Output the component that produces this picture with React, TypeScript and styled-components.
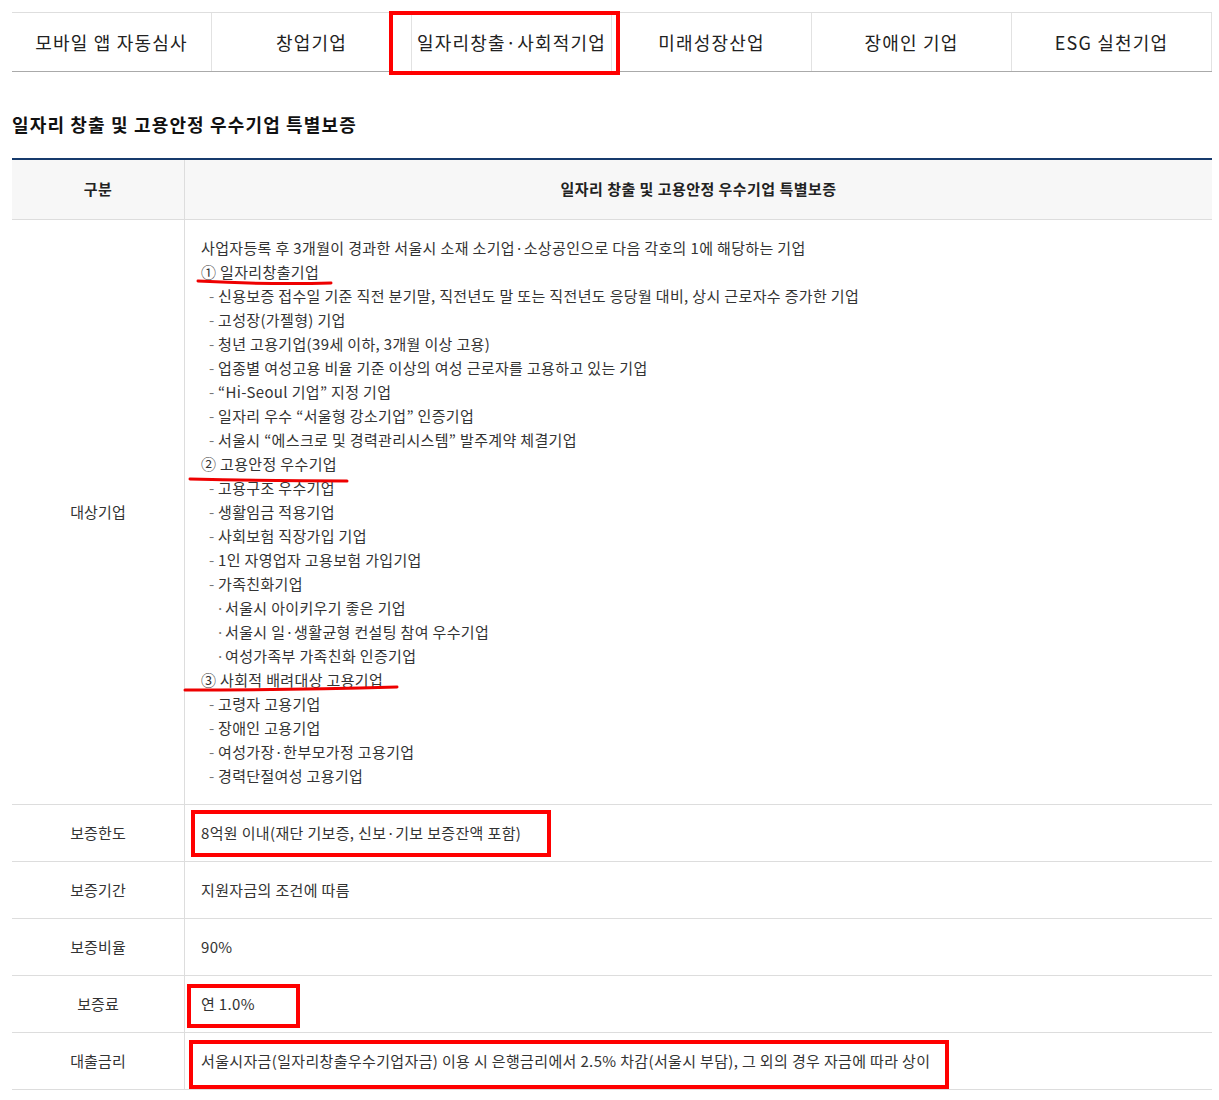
import React from 'react';
import styled, { createGlobalStyle } from 'styled-components';

const GlobalStyle = createGlobalStyle`
  html, body { margin: 0; padding: 0; background: #fff; }
  body {
    font-family: "Noto Sans CJK KR", "Noto Sans", sans-serif;
    color: #333;
  }
  * { box-sizing: border-box; }
`;

const Page = styled.div`
  width: 1200px;
  margin-left: 12px;
  padding-top: 12px;
  padding-bottom: 10px;
`;

const TabBar = styled.ul`
  display: grid;
  grid-template-columns: repeat(6, 1fr);
  margin: 0;
  padding: 0;
  list-style: none;
  border-top: 1px solid #dedede;
  border-bottom: 1px solid #aaa;
`;

const Tab = styled.li`
  position: relative;
  height: 58px;
  display: flex;
  align-items: center;
  justify-content: center;
  font-size: 18px;
  letter-spacing: 1.2px;
  color: #222;
  border-right: 1px solid #e2e2e2;
`;

const Title = styled.h3`
  margin: 39px 0 0;
  font-size: 18px;
  line-height: 26px;
  font-weight: 700;
  color: #111;
  letter-spacing: 1.15px;
`;

const Table = styled.table`
  width: 100%;
  margin-top: 21px;
  border-collapse: separate;
  border-spacing: 0;
  border-top: 2px solid #163a6c;
  table-layout: fixed;
  font-size: 15px;
  letter-spacing: 0.35px;
  line-height: 24px;
`;

const HeadCell = styled.th<{ $first?: boolean }>`
  background: #f7f7f7;
  padding: 17px 16px 18px;
  font-weight: 700;
  color: #222;
  letter-spacing: 0.45px;
  text-align: center;
  border-bottom: 1px solid #ddd;
  border-right: ${p => (p.$first ? '1px solid #ddd' : '0')};
`;

const RowHead = styled.th`
  font-weight: 400;
  color: #333;
  text-align: center;
  vertical-align: middle;
  padding: 16px 8px;
  letter-spacing: 0.1px;
  border-bottom: 1px solid #ddd;
  border-right: 1px solid #ddd;
`;

const Cell = styled.td`
  text-align: left;
  vertical-align: middle;
  color: #333;
  padding: 16px;
  border-bottom: 1px solid #ddd;
`;

const Lines = styled.div`
  display: flex;
  flex-direction: column;
`;

const Line = styled.div<{ $indent: number }>`
  position: relative;
  display: flex;
  height: 24px;
  padding-left: ${p => p.$indent}px;
  white-space: nowrap;
`;

const Marker = styled.span<{ $w: number }>`
  flex: none;
  width: ${p => p.$w}px;
  color: #777;
`;

const Marked = styled.span`
  position: relative;
  display: inline-block;
`;

const RedBox = styled.span<{ $l: number; $t: number; $w: number; $h: number }>`
  position: absolute;
  left: ${p => p.$l}px;
  top: ${p => p.$t}px;
  width: ${p => p.$w}px;
  height: ${p => p.$h}px;
  border: 4px solid #ff0000;
  pointer-events: none;
  z-index: 2;
`;

const Scribble = styled.svg<{ $l: number; $t: number }>`
  position: absolute;
  left: ${p => p.$l}px;
  top: ${p => p.$t}px;
  overflow: visible;
  z-index: 2;
  pointer-events: none;
`;

type Kind = 'plain' | 'head' | 'dash' | 'dot';
interface Mark { l: number; t: number; w: number; d: string }
interface Item { kind: Kind; text: string; mark?: Mark }

const items: Item[] = [
  { kind: 'plain', text: '사업자등록 후 3개월이 경과한 서울시 소재 소기업·소상공인으로 다음 각호의 1에 해당하는 기업' },
  { kind: 'head', text: '① 일자리창출기업', mark: { l: -5, t: 18, w: 137, d: 'M2 3 C 40 5 100 6 135 5' } },
  { kind: 'dash', text: '신용보증 접수일 기준 직전 분기말, 직전년도 말 또는 직전년도 응당월 대비, 상시 근로자수 증가한 기업' },
  { kind: 'dash', text: '고성장(가젤형) 기업' },
  { kind: 'dash', text: '청년 고용기업(39세 이하, 3개월 이상 고용)' },
  { kind: 'dash', text: '업종별 여성고용 비율 기준 이상의 여성 근로자를 고용하고 있는 기업' },
  { kind: 'dash', text: '“Hi-Seoul 기업” 지정 기업' },
  { kind: 'dash', text: '일자리 우수 “서울형 강소기업” 인증기업' },
  { kind: 'dash', text: '서울시 “에스크로 및 경력관리시스템” 발주계약 체결기업' },
  { kind: 'head', text: '② 고용안정 우수기업', mark: { l: -13, t: 24, w: 161, d: 'M2 3 Q 80 5 159 5' } },
  { kind: 'dash', text: '고용구조 우수기업' },
  { kind: 'dash', text: '생활임금 적용기업' },
  { kind: 'dash', text: '사회보험 직장가입 기업' },
  { kind: 'dash', text: '1인 자영업자 고용보험 가입기업' },
  { kind: 'dash', text: '가족친화기업' },
  { kind: 'dot', text: '서울시 아이키우기 좋은 기업' },
  { kind: 'dot', text: '서울시 일·생활균형 컨설팅 참여 우수기업' },
  { kind: 'dot', text: '여성가족부 가족친화 인증기업' },
  { kind: 'head', text: '③ 사회적 배려대상 고용기업', mark: { l: -18, t: 16, w: 216, d: 'M2 6 Q 100 6 214 3' } },
  { kind: 'dash', text: '고령자 고용기업' },
  { kind: 'dash', text: '장애인 고용기업' },
  { kind: 'dash', text: '여성가장·한부모가정 고용기업' },
  { kind: 'dash', text: '경력단절여성 고용기업' },
];

const tabs = ['모바일 앱 자동심사', '창업기업', '일자리창출·사회적기업', '미래성장산업', '장애인 기업', 'ESG 실천기업'];

const renderLine = (it: Item, i: number) => {
  const indent = it.kind === 'dash' ? 8 : it.kind === 'dot' ? 15 : 0;
  return (
    <Line key={i} $indent={indent}>
      {it.kind === 'dash' && <Marker $w={9}>-</Marker>}
      {it.kind === 'dot' && <Marker $w={9}>·</Marker>}
      <span>{it.text}</span>
      {it.mark && (
        <Scribble $l={it.mark.l} $t={it.mark.t} width={it.mark.w} height={8} viewBox={`0 0 ${it.mark.w} 8`}>
          <path d={it.mark.d} stroke="#ee0000" strokeWidth={3} strokeLinecap="round" fill="none" />
        </Scribble>
      )}
    </Line>
  );
};

export default function App() {
  return (
    <Page>
      <GlobalStyle />
      <TabBar>
        {tabs.map((t, i) => (
          <Tab key={t}>
            {t}
            {i === 2 && <RedBox $l={-23} $t={-2} $w={231} $h={64} />}
          </Tab>
        ))}
      </TabBar>

      <Title>일자리 창출 및 고용안정 우수기업 특별보증</Title>

      <Table>
        <colgroup>
          <col style={{ width: 173 }} />
          <col />
        </colgroup>
        <thead>
          <tr>
            <HeadCell $first>구분</HeadCell>
            <HeadCell>일자리 창출 및 고용안정 우수기업 특별보증</HeadCell>
          </tr>
        </thead>
        <tbody>
          <tr>
            <RowHead>대상기업</RowHead>
            <Cell>
              <Lines>{items.map(renderLine)}</Lines>
            </Cell>
          </tr>
          <tr>
            <RowHead>보증한도</RowHead>
            <Cell>
              <Marked>
                8억원 이내(재단 기보증, 신보·기보 보증잔액 포함)
                <RedBox $l={-10} $t={-11} $w={360} $h={47} />
              </Marked>
            </Cell>
          </tr>
          <tr>
            <RowHead>보증기간</RowHead>
            <Cell>지원자금의 조건에 따름</Cell>
          </tr>
          <tr>
            <RowHead>보증비율</RowHead>
            <Cell>90%</Cell>
          </tr>
          <tr>
            <RowHead>보증료</RowHead>
            <Cell>
              <Marked>
                연 1.0%
                <RedBox $l={-14} $t={-8} $w={113} $h={44} />
              </Marked>
            </Cell>
          </tr>
          <tr>
            <RowHead>대출금리</RowHead>
            <Cell>
              <Marked>
                서울시자금(일자리창출우수기업자금) 이용 시 은행금리에서 2.5% 차감(서울시 부담), 그 외의 경우 자금에 따라 상이
                <RedBox $l={-12} $t={-9} $w={760} $h={49} />
              </Marked>
            </Cell>
          </tr>
        </tbody>
      </Table>
    </Page>
  );
}
